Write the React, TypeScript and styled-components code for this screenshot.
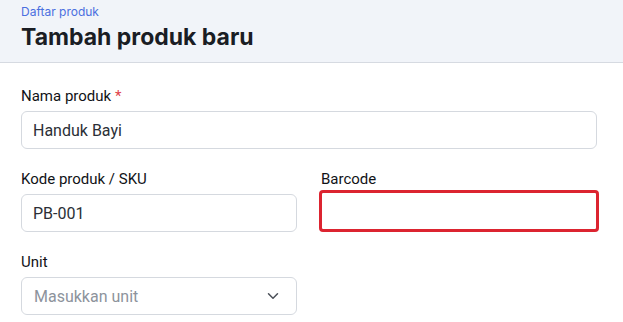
import styled, { createGlobalStyle } from 'styled-components';
import { ChevronDown } from 'lucide-react';

const GlobalStyle = createGlobalStyle`
  body {
    margin: 0;
    background: #ffffff;
    font-family: 'Roboto', 'Liberation Sans', sans-serif;
  }
`;

const App = () => {
  return (
    <>
      <GlobalStyle />
      <PageHeader>
        <a className="crumb" href="#">Daftar produk</a>
        <h1>Tambah produk baru</h1>
      </PageHeader>
      <Form>
        <Field $span={2}>
          <Label>
            Nama produk <span className="req">*</span>
          </Label>
          <Input defaultValue="Handuk Bayi" />
        </Field>
        <Field>
          <Label>Kode produk / SKU</Label>
          <Input defaultValue="PB-001" />
        </Field>
        <Field>
          <Label>Barcode</Label>
          <Input $error />
        </Field>
        <Field>
          <Label>Unit</Label>
          <Select>
            <span>Masukkan unit</span>
            <ChevronDown size={18} strokeWidth={2} />
          </Select>
        </Field>
      </Form>
    </>
  );
};

const PageHeader = styled.header`
  height: 63px;
  box-sizing: border-box;
  padding: 4px 21px 0;
  background-color: #f1f4f9;
  border-bottom: 1px solid #d6dae1;
  font-family: 'Inter', 'Liberation Sans', sans-serif;

  .crumb {
    display: block;
    font-size: 12px;
    line-height: 16px;
    color: #4a6fe0;
    text-decoration: none;
  }

  h1 {
    margin: 1px 0 0;
    font-size: 23px;
    line-height: 32px;
    font-weight: 700;
    color: #1a1d24;
  }
`;

const Form = styled.form`
  display: grid;
  grid-template-columns: 1fr 1fr;
  column-gap: 24px;
  row-gap: 20px;
  padding: 23px 26px 0 21px;
`;

const Field = styled.div<{ $span?: number }>`
  display: flex;
  flex-direction: column;
  gap: 5px;
  grid-column: span ${({ $span }) => $span ?? 1};
`;

const Label = styled.label`
  font-size: 15px;
  line-height: 20px;
  font-weight: 400;
  color: #111317;

  .req {
    color: #e0414a;
  }
`;

const Input = styled.input<{ $error?: boolean }>`
  box-sizing: border-box;
  width: 100%;
  height: 38px;
  padding: 0 11px;
  border: 1px solid #d5d9df;
  border-radius: 6px;
  font-family: 'Roboto', 'Liberation Sans', sans-serif;
  font-size: 16px;
  color: #2b2f36;
  background: #fff;
  outline: ${({ $error }) => ($error ? '3px solid #dc2430' : 'none')};
  outline-offset: -1px;
  ${({ $error }) => $error && 'border-radius: 2px; transform: translateY(-2px);'}
`;

const Select = styled.div`
  box-sizing: border-box;
  height: 38px;
  padding: 0 14px 0 12px;
  display: flex;
  align-items: center;
  justify-content: space-between;
  border: 1px solid #d5d9df;
  border-radius: 6px;
  font-size: 16px;
  color: #8d939c;

  svg {
    color: #4b5058;
  }
`;

export default App;
